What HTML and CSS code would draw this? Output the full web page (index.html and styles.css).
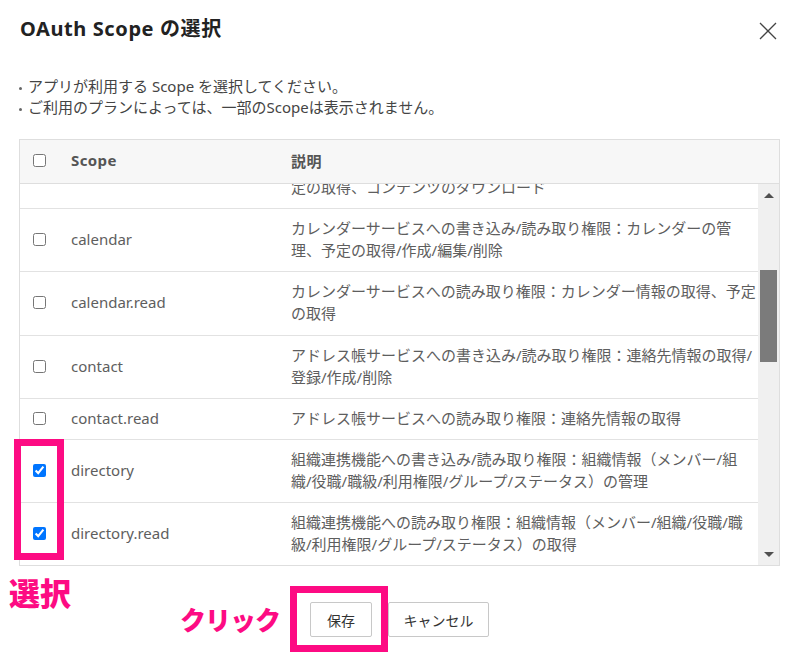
FILE: index.html
```html
<!DOCTYPE html>
<html lang="ja">
<head>
<meta charset="utf-8">
<title>OAuth Scope の選択</title>
<link rel="stylesheet" href="styles.css">
</head>
<body>
<div class="dialog">
  <div class="head">
    <h1 class="title">OAuth Scope の選択</h1>
    <button class="close" aria-label="close">
      <svg width="18" height="18" viewBox="0 0 18 18"><path d="M1 1L17 17M17 1L1 17" stroke="#444" stroke-width="1.3" fill="none"/></svg>
    </button>
  </div>
  <ul class="notes">
    <li>アプリが利用する Scope を選択してください。</li>
    <li>ご利用のプランによっては、一部のScopeは表示されません。</li>
  </ul>
  <div class="table">
    <div class="thead grid">
      <div class="c-check"><input type="checkbox"></div>
      <div class="c-scope">Scope</div>
      <div class="c-desc">説明</div>
    </div>
    <div class="tbody">
      <div class="viewport">
        <div class="rows">
          <div class="row grid">
            <div class="c-check"><input type="checkbox"></div>
            <div class="c-scope">file.read</div>
            <div class="c-desc">ファイルサービスへの読み取り権限：ファイル情報の取得、指<br>定の取得、コンテンツのダウンロード</div>
          </div>
          <div class="row grid">
            <div class="c-check"><input type="checkbox"></div>
            <div class="c-scope">calendar</div>
            <div class="c-desc">カレンダーサービスへの書き込み/読み取り権限：カレンダーの管<br>理、予定の取得/作成/編集/削除</div>
          </div>
          <div class="row grid">
            <div class="c-check"><input type="checkbox"></div>
            <div class="c-scope">calendar.read</div>
            <div class="c-desc">カレンダーサービスへの読み取り権限：カレンダー情報の取得、予定<br>の取得</div>
          </div>
          <div class="row grid">
            <div class="c-check"><input type="checkbox"></div>
            <div class="c-scope">contact</div>
            <div class="c-desc">アドレス帳サービスへの書き込み/読み取り権限：連絡先情報の取得/<br>登録/作成/削除</div>
          </div>
          <div class="row grid">
            <div class="c-check"><input type="checkbox"></div>
            <div class="c-scope">contact.read</div>
            <div class="c-desc">アドレス帳サービスへの読み取り権限：連絡先情報の取得</div>
          </div>
          <div class="row grid">
            <div class="c-check"><input type="checkbox" checked></div>
            <div class="c-scope">directory</div>
            <div class="c-desc">組織連携機能への書き込み/読み取り権限：組織情報（メンバー/組<br>織/役職/職級/利用権限/グループ/ステータス）の管理</div>
          </div>
          <div class="row grid">
            <div class="c-check"><input type="checkbox" checked></div>
            <div class="c-scope">directory.read</div>
            <div class="c-desc">組織連携機能への読み取り権限：組織情報（メンバー/組織/役職/職<br>級/利用権限/グループ/ステータス）の取得</div>
          </div>
        </div>
      </div>
      <div class="scrollbar">
        <div class="sb-btn"><span class="tri-up"></span></div>
        <div class="sb-track"><div class="sb-thumb"></div></div>
        <div class="sb-btn"><span class="tri-down"></span></div>
      </div>
    </div>
  </div>
  <div class="footer">
    <button class="btn btn-save">保存</button>
    <button class="btn btn-cancel">キャンセル</button>
  </div>

  <div class="mark mark-check"></div>
  <div class="mark mark-save"></div>
  <div class="label label-select">選択</div>
  <div class="label label-click">クリック</div>
</div>
</body>
</html>
```
FILE: styles.css
```css
* { box-sizing: border-box; }
html, body {
  margin: 0;
  padding: 0;
  background: #fff;
}
body {
  font-family: "Noto Sans", "Noto Sans CJK JP", sans-serif;
  color: #444;
}
.dialog {
  position: relative;
  width: 798px;
  height: 666px;
  padding-top: 15px;
}
.head {
  display: flex;
  justify-content: space-between;
  align-items: center;
  height: 28px;
  padding: 0 21px 0 20px;
}
.title {
  margin: 0;
  font-size: 20px;
  font-weight: bold;
  line-height: 28px;
  color: #222;
  letter-spacing: 0.6px;
}
.close {
  border: 0;
  background: none;
  padding: 0;
  width: 18px;
  height: 18px;
  margin-top: 3px;
  display: block;
}
.close svg { display: block; }
.notes {
  list-style: none;
  margin: 33px 0 0 0;
  padding: 0 0 0 28px;
  font-size: 15px;
  line-height: 21px;
  color: #444;
}
.notes li {
  position: relative;
}
.notes li::before {
  content: "";
  position: absolute;
  left: -9px;
  top: 11px;
  width: 3px;
  height: 3px;
  border-radius: 50%;
  background: #666;
}
.table {
  margin: 21px 0 0 19px;
  width: 761px;
  border: 1px solid #dedede;
}
.grid {
  display: grid;
  grid-template-columns: 51px 220px 1fr;
  align-items: center;
}
.c-check {
  padding-left: 13px;
  display: flex;
  align-items: center;
}
.c-check input {
  margin: 0;
  width: 13px;
  height: 13px;
}
.thead {
  height: 44px;
  padding-bottom: 3px;
  background: #f7f7f7;
  border-bottom: 1px solid #dedede;
  font-size: 15px;
  font-weight: bold;
  color: #555;
  letter-spacing: 0.4px;
}
.thead .c-check { padding-top: 1px; }
.tbody {
  display: flex;
  height: 381px;
}
.viewport {
  flex: 1;
  overflow: hidden;
}
.rows {
  margin-top: -38px;
}
.row {
  border-bottom: 1px solid #e2e2e2;
  padding: 8px 0 10.2px;
  font-size: 15px;
  line-height: 22px;
  color: #5e5e5e;
}
.row .c-check { padding-top: 1px; }
.row .c-desc {
  white-space: nowrap;
}
.scrollbar {
  width: 21px;
  background: #f0f0f0;
  display: flex;
  flex-direction: column;
}
.sb-btn {
  height: 22px;
  display: flex;
  align-items: center;
  justify-content: center;
}
.tri-up, .tri-down {
  width: 0;
  height: 0;
  border-left: 5px solid transparent;
  border-right: 5px solid transparent;
}
.tri-up { border-bottom: 5px solid #505050; }
.tri-down { border-top: 5px solid #505050; }
.sb-track {
  flex: 1;
  padding: 64px 2px 0;
}
.sb-thumb {
  height: 92px;
  background: #7b7b7b;
}
.footer {
  display: flex;
  justify-content: center;
  gap: 16px;
  margin-top: 36px;
  padding-left: 1px;
}
.btn {
  height: 35px;
  border: 1px solid #c8c8c8;
  border-radius: 2px;
  background: #fff;
  font-family: "Noto Sans", "Noto Sans CJK JP", sans-serif;
  font-size: 14px;
  color: #333;
  padding: 0;
}
.btn-save { width: 62px; }
.btn-cancel { width: 101px; }

.mark {
  position: absolute;
  border: 7px solid #fd0b83;
}
.mark-check {
  left: 14px;
  top: 439px;
  width: 50px;
  height: 121px;
}
.mark-save {
  left: 290px;
  top: 586px;
  width: 98px;
  height: 66px;
}
.label {
  position: absolute;
  color: #fd0b83;
  font-weight: 900;
  font-family: "Noto Sans CJK JP", sans-serif;
  white-space: nowrap;
}
.label-select {
  left: 9px;
  top: 575px;
  font-size: 31px;
  line-height: 34px;
}
.label-click {
  left: 180px;
  top: 603px;
  font-size: 26px;
  line-height: 32px;
  letter-spacing: -1px;
}
```
